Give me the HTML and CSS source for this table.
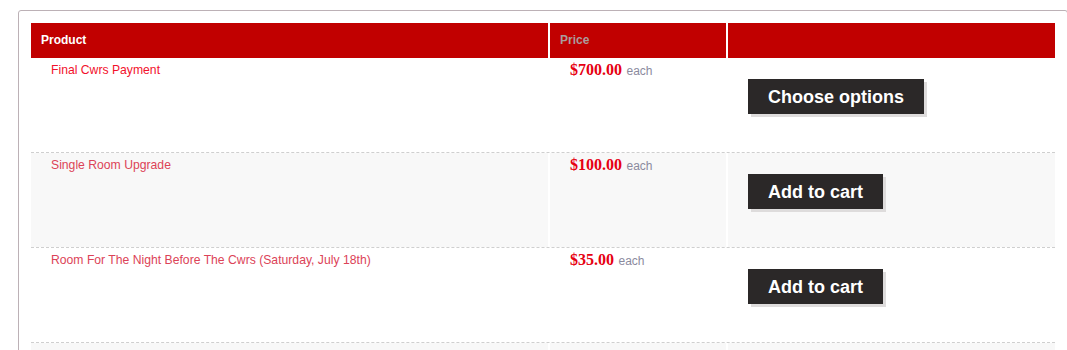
FILE: index.html
```html
<!DOCTYPE html>
<html>
<head>
<meta charset="utf-8">
<link rel="stylesheet" href="styles.css">
</head>
<body>
<div class="box">
  <div class="products">
    <div class="row head">
      <div class="cell">Product</div>
      <div class="cell muted">Price</div>
      <div class="cell"></div>
    </div>
    <div class="row">
      <div class="cell name"><a class="link active" href="#">Final Cwrs Payment</a></div>
      <div class="cell price"><span class="amount">$700.00</span> <span class="each">each</span></div>
      <div class="cell action"><button class="btn">Choose options</button></div>
    </div>
    <div class="row alt">
      <div class="cell name"><a class="link" href="#">Single Room Upgrade</a></div>
      <div class="cell price"><span class="amount">$100.00</span> <span class="each">each</span></div>
      <div class="cell action"><button class="btn">Add to cart</button></div>
    </div>
    <div class="row">
      <div class="cell name"><a class="link" href="#">Room For The Night Before The Cwrs (Saturday, July 18th)</a></div>
      <div class="cell price"><span class="amount">$35.00</span> <span class="each">each</span></div>
      <div class="cell action"><button class="btn">Add to cart</button></div>
    </div>
    <div class="row alt">
      <div class="cell name"></div>
      <div class="cell price"></div>
      <div class="cell action"></div>
    </div>
  </div>
</div>
</body>
</html>
```

FILE: styles.css
```css
html, body {
  margin: 0;
  padding: 0;
  background: #fff;
  font-family: "Liberation Sans", Arial, sans-serif;
  overflow: hidden;
}

.box {
  margin: 10px 0 0 18px;
  width: 1025px;
  border: 1px solid #bcb1b6;
  border-radius: 3px;
  padding: 12px 11px 40px 12px;
}

.products {
  width: 1024px;
  display: flex;
  flex-direction: column;
}

.row {
  display: grid;
  grid-template-columns: 517px 176px 327px;
  column-gap: 2px;
  height: 94px;
  border-bottom: 1px dashed #cfcfcf;
}

.row.head {
  height: 35px;
  border-bottom: none;
}

.head .cell {
  background: #c10000;
  color: #fff;
  font-weight: bold;
  font-size: 12px;
  line-height: 15px;
  padding: 10px 10px;
}

.head .cell.muted {
  color: #ab9c9c;
}

.row.alt .cell {
  background: #f8f8f8;
}

.cell {
  padding: 4px 20px 0 20px;
}

.name {
  font-size: 12.2px;
  line-height: 14px;
  padding-top: 5px;
}

.link {
  font-size: 12.2px;
  line-height: 14px;
  color: #dc4357;
  text-decoration: none;
}

.link.active {
  color: #f2112b;
}

.price {
  padding-top: 3px;
  line-height: 18px;
}

.amount {
  font-family: "Liberation Serif", "Times New Roman", serif;
  font-weight: bold;
  font-size: 16px;
  color: #e60012;
}

.each {
  font-size: 12px;
  color: #8b8a9e;
}

.action {
  padding-top: 21px;
}

.btn {
  display: inline-block;
  background: #2b2828;
  color: #fff;
  border: none;
  border-radius: 0;
  font-family: "Liberation Sans", Arial, sans-serif;
  font-weight: bold;
  font-size: 18px;
  line-height: 21px;
  padding: 8px 20px 6px;
  box-shadow: 3px 3px 0 #dedcdc;
  cursor: pointer;
}
```
